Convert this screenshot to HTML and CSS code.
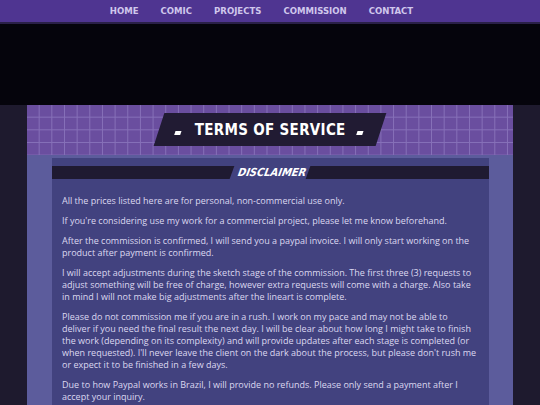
FILE: index.html
```html
<!DOCTYPE html>
<html lang="en">
<head>
    <meta charset="UTF-8">
    <meta name="viewport" content="width=device-width, initial-scale=1.0">
    <title>Terms of Service</title>
    <link rel="stylesheet" href="styles.css">
</head>
<body>
    <header class="topbar">
        <nav>
            <ul class="menu">
                <li><a href="#">Home</a></li>
                <li><a href="#">Comic</a></li>
                <li><a href="#">Projects</a></li>
                <li><a href="#">Commission</a></li>
                <li><a href="#">Contact</a></li>
            </ul>
        </nav>
    </header>
    <div class="hero"></div>
    <main class="page">
        <div class="tos-head">
            <h1 class="tos-title"><span>Terms of Service</span></h1>
        </div>
        <div class="tos-body">
            <section class="card">
                <h2 class="card-head"><span>Disclaimer</span></h2>
                <div class="card-text">
                    <p>All the prices listed here are for personal, non-commercial use only.</p>
                    <p>If you're considering use my work for a commercial project, please let me know beforehand.</p>
                    <p>After the commission is confirmed, I will send you a paypal invoice. I will only start working on the product after payment is confirmed.</p>
                    <p>I will accept adjustments during the sketch stage of the commission. The first three (3) requests to adjust something will be free of charge, however extra requests will come with a charge. Also take in mind I will not make big adjustments after the lineart is complete.</p>
                    <p>Please do not commission me if you are in a rush. I work on my pace and may not be able to deliver if you need the final result the next day. I will be clear about how long I might take to finish the work (depending on its complexity) and will provide updates after each stage is completed (or when requested). I'll never leave the client on the dark about the process, but please don't rush me or expect it to be finished in a few days.</p>
                    <p>Due to how Paypal works in Brazil, I will provide no refunds. Please only send a payment after I accept your inquiry.</p>
                </div>
            </section>
        </div>
    </main>
</body>
</html>
```

FILE: styles.css
```css
body {
    margin: 0;
    padding: 0;
    background-color: #1e1a2e;
    font-family: "Open Sans", sans-serif;
    overflow: hidden;
}
.topbar {
    background: #4f3591;
    border-bottom: 2px solid #2a2048;
    height: 22px;
}
.menu {
    display: flex;
    justify-content: center;
    align-items: center;
    gap: 22px;
    height: 22px;
    margin: 0;
    padding: 0 17px 0 0;
    list-style: none;
}
.menu li {
    line-height: 1;
}
.menu a {
    display: block;
    color: #d0c7ec;
    font-family: "DejaVu Sans Condensed", "DejaVu Sans", sans-serif;
    font-weight: bold;
    font-size: 9.5px;
    line-height: 1;
    text-transform: uppercase;
    text-decoration: none;
}
.hero {
    height: 81px;
    background: #05040c;
}
.page {
    margin: 0 27px;
}
.tos-head {
    height: 50px;
    box-sizing: border-box;
    padding-top: 8px;
    display: flex;
    justify-content: center;
    align-items: flex-start;
    background-color: #6a4e9f;
    background-image:
        linear-gradient(90deg, transparent 11.7px, #8670b8 11.7px),
        linear-gradient(transparent 11.7px, #8670b8 11.7px);
    background-size: 12.67px 12.67px;
}
.tos-title {
    margin: 0;
    width: 222px;
    height: 33px;
    display: flex;
    justify-content: center;
    align-items: center;
    gap: 13px;
    background: #211b33;
    transform: skewX(-18deg);
}
.tos-title::before,
.tos-title::after {
    content: "";
    width: 6px;
    height: 4px;
    margin-top: 7px;
    background: #fff;
}
.tos-title span {
    display: inline-block;
    transform: skewX(18deg);
    color: #fff;
    font-family: "DejaVu Sans Condensed", "DejaVu Sans", sans-serif;
    font-weight: bold;
    font-size: 15px;
    letter-spacing: 0.3px;
    text-transform: uppercase;
}
.tos-body {
    background: #5c5c9c;
    padding: 3px 24px 0 25px;
}
.card {
    background: #42427f;
    padding-top: 8px;
    min-height: 260px;
}
.card-head {
    margin: 0;
    height: 13px;
    display: flex;
    justify-content: center;
    background: #1f1a31;
}
.card-head span {
    display: inline-block;
    padding: 0 2px 0 6px;
    background: #42427f;
    transform: skewX(-20deg);
    color: #fff;
    font-family: "DejaVu Sans Condensed", "DejaVu Sans", sans-serif;
    font-weight: bold;
    font-size: 11px;
    line-height: 13px;
    text-transform: uppercase;
}
.card-text {
    padding: 16px 11px 0 10px;
    color: #dcd8f0;
    font-size: 9px;
    line-height: 12px;
}
.card-text p {
    margin: 0 0 8px;
}
```
